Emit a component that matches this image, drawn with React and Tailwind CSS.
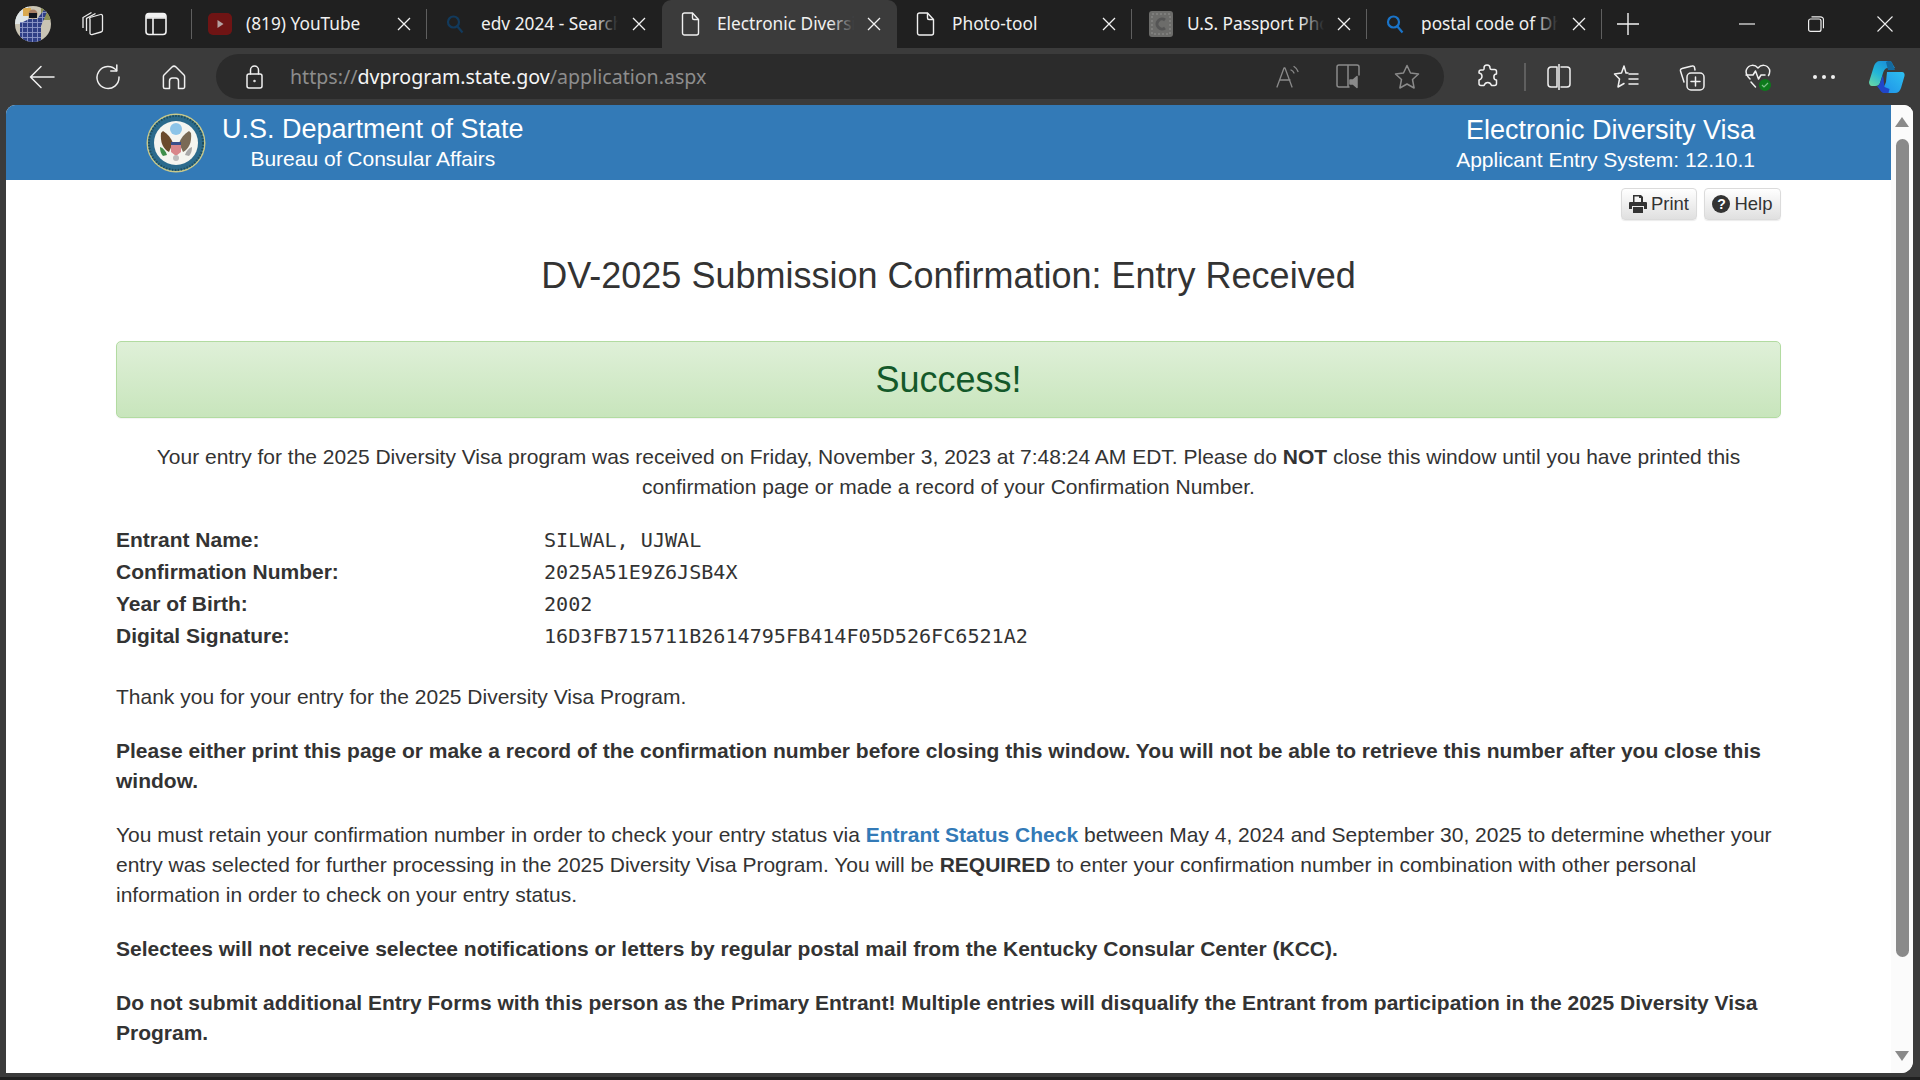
// App.jsx
import React from 'react';

const CloseIcon = ({ size = 14, stroke = 1.3 }) => (
  <svg width={size} height={size} viewBox="0 0 14 14" fill="none" stroke="#f2f2f2" strokeWidth={stroke}>
    <path d="M1 1l12 12M13 1L1 13" />
  </svg>
);

const PageIcon = () => (
  <svg width="20" height="24" viewBox="0 0 20 24" fill="none" stroke="#f0f0f0" strokeWidth="1.4">
    <path d="M3.5 1h8l6 6.5V21a2 2 0 0 1-2 2h-12a2 2 0 0 1-2-2V3a2 2 0 0 1 2-2z" />
    <path d="M11.5 1v5a1.5 1.5 0 0 0 1.5 1.5h4.5" />
  </svg>
);

const SearchIcon = ({ color }) => (
  <svg width="18" height="20" viewBox="0 0 18 20" fill="none" stroke={color} strokeWidth="2.2">
    <circle cx="7.5" cy="8" r="5.5" />
    <path d="M11.5 12.5l5 6" />
  </svg>
);

const YouTubeIcon = () => (
  <svg width="24" height="22" viewBox="0 0 24 22">
    <rect width="24" height="22" rx="5" fill="#6f1414" />
    <path d="M9.5 7l6 4-6 4z" fill="#b5a2a2" />
  </svg>
);

const StampIcon = () => (
  <svg width="24" height="26" viewBox="0 0 24 26">
    <rect width="24" height="26" rx="3" fill="#6c6c6a" />
    <rect x="3" y="3" width="18" height="20" fill="none" stroke="#7e7e7c" strokeWidth="2" strokeDasharray="2 2" />
    <path d="M16 9a5 5 0 1 0 0 8" fill="none" stroke="#555" strokeWidth="3" />
  </svg>
);

const tabs = [
  { icon: <YouTubeIcon />, title: '(819) YouTube', textW: 'w-[122px]', pl: 'pl-[16px]' },
  { icon: <SearchIcon color="#123a5c" />, title: 'edv 2024 - Search', textW: 'w-[137px]', pl: 'pl-[16px]', fade: true },
  { icon: <PageIcon />, title: 'Electronic Diversity Visa', textW: 'w-[137px]', pl: 'pl-[17px]', fade: true, active: true },
  { icon: <PageIcon />, title: 'Photo-tool', textW: 'w-[122px]', pl: 'pl-[17px]' },
  { icon: <StampIcon />, title: 'U.S. Passport Photo', textW: 'w-[137px]', pl: 'pl-[17px]', fade: true },
  { icon: <SearchIcon color="#1a74c9" />, title: 'postal code of Dhaka', textW: 'w-[137px]', pl: 'pl-[16px]', fade: true },
];

const Avatar = () => (
  <svg width="36" height="48" viewBox="0 0 36 48" className="ml-[15px]">
    <defs>
      <clipPath id="avatarClip"><ellipse cx="18" cy="24" rx="18" ry="18" /></clipPath>
      <pattern id="plaid" width="5" height="5" patternUnits="userSpaceOnUse">
        <rect width="5" height="5" fill="#2f3f86" />
        <path d="M0 2.5h5M2.5 0v5" stroke="#8d98c8" strokeWidth="0.9" />
      </pattern>
    </defs>
    <g clipPath="url(#avatarClip)">
      <rect y="6" width="36" height="36" fill="#c9c4b4" />
      <rect x="0" y="6" width="13" height="18" fill="#dfe6e8" />
      <rect x="8" y="8" width="8" height="8" fill="#d9a94f" />
      <rect x="26" y="8" width="10" height="12" fill="#8b8f55" />
      <circle cx="18" cy="14" r="4.5" fill="#a97f66" />
      <rect x="14" y="13" width="8" height="5" fill="#14161f" />
      <path d="M8 22l6-3h8l7-9 3 2-6 14v18H9z" fill="url(#plaid)" />
      <rect x="5" y="22" width="5" height="18" fill="url(#plaid)" />
    </g>
  </svg>
);

const TabStrip = () => (
  <div className="flex h-12 items-center bg-[#202020] text-[17.3px] text-[#f0f0f0] font-['Noto_Sans','Open_Sans',sans-serif]">
    <div className="flex w-[192px] shrink-0 items-center">
      <Avatar />
      <svg width="24" height="26" viewBox="0 0 24 26" fill="none" stroke="#ececec" strokeWidth="1.3" className="ml-[30px]">
        <path d="M9 6.5l10.5-3a1.5 1.5 0 0 1 2 1.5l0 14a2 2 0 0 1-1.5 2l-9 2.5a1.5 1.5 0 0 1-2-1.5V8.5A2 2 0 0 1 9 6.5z" />
        <path d="M5.5 20V7.5l9-5M2 17V6.5l8.5-5" />
      </svg>
      <svg width="22" height="24" viewBox="0 0 22 24" fill="none" stroke="#f2f2f2" strokeWidth="1.6" className="ml-[40px]">
        <rect x="1" y="1.5" width="20" height="21" rx="3" />
        <path d="M1 6h20M8 6v16.5" />
        <path d="M2 5V4a2 2 0 0 1 2-2h14a2 2 0 0 1 2 2v1z" fill="#f2f2f2" />
      </svg>
      <div className="ml-auto h-[30px] w-px bg-[#5f5f5f]" />
    </div>
    {tabs.map((t, i) => (
      <div
        key={t.title}
        className={
          'flex h-full w-[235px] shrink-0 items-center ' + t.pl +
          (t.active ? ' rounded-t-[9px] bg-[#3b3b3b]' : '')
        }
      >
        <span className="flex w-[24px] shrink-0 justify-center">{t.icon}</span>
        <span className={'relative ml-[14px] overflow-hidden whitespace-nowrap pb-[1px] ' + t.textW}>
          {t.title}
          {t.fade && (
            <span
              className={
                'absolute inset-y-0 right-0 w-[24px] bg-gradient-to-r from-transparent ' +
                (t.active ? 'to-[#3b3b3b]' : 'to-[#202020]')
              }
            />
          )}
        </span>
        <span className={'ml-auto flex ' + (i !== 1 && i !== 2 ? 'mr-[15px]' : 'mr-[16px]')}><CloseIcon /></span>
        {i !== 1 && i !== 2 && <span className="h-[30px] w-px shrink-0 bg-[#5f5f5f]" />}
      </div>
    ))}
    <svg width="22" height="22" viewBox="0 0 22 22" stroke="#f2f2f2" strokeWidth="1.4" className="ml-[15px]">
      <path d="M11 0v22M0 11h22" />
    </svg>
    <div className="ml-auto flex items-center">
      <svg width="16" height="2" viewBox="0 0 16 2" className="mr-[53px]"><path d="M0 1h16" stroke="#eee" strokeWidth="1.2" /></svg>
      <svg width="16" height="16" viewBox="0 0 16 16" fill="none" stroke="#eee" strokeWidth="1.2" className="mr-[53px]">
        <rect x="0.6" y="3" width="12.4" height="12.4" rx="2" />
        <path d="M3.5 0.8h9a3 3 0 0 1 3 3v8.5" />
      </svg>
      <svg width="16" height="16" viewBox="0 0 16 16" stroke="#eee" strokeWidth="1.1" className="mr-[27px]"><path d="M0.5 0.5l15 15M15.5 0.5l-15 15" /></svg>
    </div>
  </div>
);

const ToolIcon = ({ className, children, w = 24, h = 24, stroke = '#f0f0f0', sw = 1.5 }) => (
  <svg width={w} height={h} viewBox={`0 0 ${w} ${h}`} fill="none" stroke={stroke} strokeWidth={sw} strokeLinejoin="round" strokeLinecap="round" className={className}>
    {children}
  </svg>
);

const Toolbar = () => (
  <div className="flex h-[57px] items-center bg-[#3b3b3b]">
    <ToolIcon className="ml-[29px]" w={26} h={24}>
      <path d="M25 12H1.5M12 1.5L1.5 12 12 22.5" />
    </ToolIcon>
    <ToolIcon className="ml-[40px]" w={26} h={26}>
      <path d="M21.5 6.5A11 11 0 1 0 24 13" />
      <path d="M21.8 1v6h-6" />
    </ToolIcon>
    <ToolIcon className="ml-[41px]" w={24} h={26}>
      <path d="M2 11L10 3a3 3 0 0 1 4 0l8 8a2 2 0 0 1 .6 1.5V23a1.5 1.5 0 0 1-1.5 1.5H16.5V17a3 3 0 0 0-3-3h-3a3 3 0 0 0-3 3v7.5H2.9A1.5 1.5 0 0 1 1.4 23V12.5A2 2 0 0 1 2 11z" />
    </ToolIcon>
    <div className="ml-[30px] flex h-[45px] w-[1228px] items-center rounded-full bg-[#2b2b2b]">
      <ToolIcon className="ml-[30px]" w={17} h={24}>
        <rect x="1" y="9" width="15" height="14" rx="2" />
        <path d="M4.5 9V5a4 4 0 0 1 8 0v4" />
        <circle cx="8.5" cy="16" r="0.5" />
      </ToolIcon>
      <span className="ml-[27px] whitespace-nowrap font-['Noto_Sans','Open_Sans',sans-serif] text-[19.6px] text-[#8d8d8d]">
        https://<span className="text-[#f5f5f5]">dvprogram.state.gov</span>/application.aspx
      </span>
      <div className="ml-auto flex items-center">
        <ToolIcon stroke="#8a8a8a" w={24} h={24} sw={1.3} className="mr-[36px]">
          <path d="M1 22L8 3h1l7 19M4 15h10M15 5a6 6 0 0 1 3 3M18 1.5a9 9 0 0 1 4 5" />
        </ToolIcon>
        <ToolIcon stroke="#8a8a8a" w={26} h={26} sw={1.5} className="mr-[32px]">
          <path d="M13 23H3a2 2 0 0 1-2-2V3a2 2 0 0 1 2-2h18a2 2 0 0 1 2 2v8M12 1v22" />
          <path d="M14 16h3l4-3.5v11L17 20h-3z" fill="#8a8a8a" />
        </ToolIcon>
        <ToolIcon stroke="#8a8a8a" w={26} h={26} sw={1.5} className="mr-[24px]">
          <path d="M13 1.5l3.5 7.5 8 1-6 5.5 1.6 8.5-7.1-4-7.1 4 1.6-8.500-6-5.500 8-1z" />
        </ToolIcon>
      </div>
    </div>
    <ToolIcon className="ml-[30px]" w={26} h={26}>
      <path d="M10 4a3 3 0 0 1 6 0c0 1 .5 1.5 1.5 1.5h3a2 2 0 0 1 2 2v2.5c-3.5 0-3.5 6 0 6v3.5a2 2 0 0 1-2 2h-3c-1.5-4-6-4-7.5 0h-3a2 2 0 0 1-2-2v-3.5c4-1 4-6.5 0-7V8a2 2 0 0 1 2-2h2A1.500 1.500 0 0 0 10 4z" />
    </ToolIcon>
    <div className="ml-[24px] h-[28px] w-[2px] bg-[#5f5f5f]" />
    <ToolIcon className="ml-[21px]" w={24} h={26}>
      <path d="M10 3H4a3 3 0 0 0-3 3v14a3 3 0 0 0 3 3h6zM14 3h6a3 3 0 0 1 3 3v14a3 3 0 0 1-3 3h-6M12 0v26" />
    </ToolIcon>
    <ToolIcon className="ml-[42px]" w={26} h={26}>
      <path d="M15 9h-2L11 2 8.5 9 1.5 10l5 5L5 23l6-3.5" />
      <path d="M16 10h9M16 15h9M16 20h9" />
    </ToolIcon>
    <ToolIcon className="ml-[40px]" w={26} h={28}>
      <path d="M5 19L1.5 8a2 2 0 0 1 1.5-2.5L13 3a2 2 0 0 1 2.5 1.5L16 7" />
      <rect x="8" y="10" width="17" height="17" rx="4" />
      <path d="M16.5 14v9M12 18.5h9" />
    </ToolIcon>
    <div className="relative ml-[40px] h-[28px] w-[26px]">
      <ToolIcon w={26} h={26}>
        <path d="M5 16C1 12 .5 9 1.5 6.5 4 1 10 1.5 13 5c3-3.5 9-4 11.5 1.5.5 2 .5 3.5-1 6" />
        <path d="M1 12h7l2.5-4 3 8 2.5-4h4M6 19l4.5 5" />
      </ToolIcon>
      <span className="absolute bottom-0 right-0 flex h-[12px] w-[12px] items-center justify-center rounded-full bg-[#0d7a1c]">
        <svg width="8" height="8" viewBox="0 0 8 8" fill="none" stroke="#7fc08a" strokeWidth="1.2"><path d="M1 4l2 2 4-4" /></svg>
      </span>
    </div>
    <div className="ml-[42px] flex gap-[5px]">
      <span className="h-[4px] w-[4px] rounded-full bg-[#f0f0f0]" />
      <span className="h-[4px] w-[4px] rounded-full bg-[#f0f0f0]" />
      <span className="h-[4px] w-[4px] rounded-full bg-[#f0f0f0]" />
    </div>
    <svg width="36" height="32" viewBox="0 0 36 32" className="ml-[34px]">
      <defs>
        <linearGradient id="copA" x1="0" y1="1" x2="0.7" y2="0">
          <stop offset="0" stopColor="#6fd9a0" />
          <stop offset="0.5" stopColor="#22b6d8" />
          <stop offset="1" stopColor="#1a8fd8" />
        </linearGradient>
        <linearGradient id="copB" x1="0" y1="1" x2="1" y2="0">
          <stop offset="0" stopColor="#1e8fe8" />
          <stop offset="1" stopColor="#2ec0f0" />
        </linearGradient>
      </defs>
      <path d="M11 0h9c2 0 3 1 3.5 3L26 7H19c-3 0-4 2-5 5l-3 10c-1 2-2 3-5 3H3c-2 0-3-2-3-4l5-16c1-3 3-5 6-5z" fill="url(#copA)" />
      <path d="M18 11h15c2 0 3 2 2.5 4L32 27c-1 3-3 5-6 5h-9c-2 0-3-1-3.5-2.5L12 26c3 0 4-2 5-5z" fill="url(#copB)" />
      <path d="M14 14l-3 8c-1 2-1.5 3-3 3l4.500 6c1 1 2 1 4 1h3l1-4-5-2z" fill="#2146c9" />
      <path d="M19 0h1c2 0 3 1 3.5 3L26 9h-7l-2-8z" fill="#156a9e" />
    </svg>
  </div>
);

// rough stand-in for the Department of State seal
const Seal = () => (
  <svg width="60" height="60" viewBox="0 0 60 60">
    <circle cx="30" cy="30" r="29.5" fill="#c9c98a" />
    <circle cx="30" cy="30" r="28" fill="#2b6a8c" />
    <circle cx="30" cy="30" r="27" fill="none" stroke="#1e4d5e" strokeWidth="2" strokeDasharray="1.5 1.5" />
    <circle cx="30" cy="30" r="22" fill="#f5f5f0" />
    <circle cx="30" cy="16" r="6" fill="#8cc4e8" />
    <path d="M17 18c5 3 8 7 10 12l-4 9c-6-3-9-10-8-19z" fill="#6b4a2c" />
    <path d="M43 18c-5 3-8 7-10 12l4 9c6-3 9-10 8-19z" fill="#7a6a55" />
    <path d="M25 29h10v10l-5 4-5-4z" fill="#d9868a" />
    <rect x="25" y="29" width="10" height="3" fill="#3a4f8a" />
    <path d="M14 34c3 1 6 4 7 8l-4 1c-2-2-3-5-3-9z" fill="#3f8f4a" />
    <path d="M46 34c-3 1-6 4-7 8l4 1c2-2 3-5 3-9z" fill="#a8a8a8" />
    <circle cx="30" cy="45" r="3" fill="#bcbcbc" />
  </svg>
);

const Btn = ({ icon, label, w }) => (
  <div className={'flex h-[32px] items-center justify-center gap-[4px] rounded-[4px] border border-[#dbdbdb] bg-gradient-to-b from-white to-[#e0e0e0] text-[18.5px] text-[#333] shadow-[0_1px_1px_rgba(0,0,0,0.08)] ' + w}>
    {icon}
    {label}
  </div>
);

const Row = ({ label, value }) => (
  <div className="flex h-[32px] items-center">
    <b className="w-[428px] shrink-0 font-bold">{label}</b>
    <span className="font-['DejaVu_Sans_Mono',monospace] text-[20.1px]">{value}</span>
  </div>
);

const PageContent = () => (
  <div className="min-w-0 flex-1 overflow-hidden">
    <div className="flex h-[75px] items-center justify-between bg-[#337ab7] text-white">
      <div className="ml-[140px] flex items-center gap-[16px]">
        <Seal />
        <div className="mb-[2px] flex flex-col items-center">
          <div className="text-[27px] leading-[34px]">U.S. Department of State</div>
          <div className="text-[21px] leading-[26px]">Bureau of Consular Affairs</div>
        </div>
      </div>
      <div className="mr-[136px] flex flex-col items-end">
        <div className="text-[27px] leading-[34px]">Electronic Diversity Visa</div>
        <div className="text-[21px] leading-[26px]">Applicant Entry System: 12.10.1</div>
      </div>
    </div>

    <div className="ml-[110px] w-[1665px]">
      <div className="flex justify-end gap-[7px] pt-[8px]">
        <Btn
          label="Print"
          w="w-[76px]"
          icon={
            <svg width="18" height="18" viewBox="0 0 18 18" fill="#333">
              <path d="M4 0h8l2 2v5h-2V3h-2V1.5H5.5V7H4zM1 7h16a1 1 0 0 1 1 1v6h-3v-3H3v3H0V8a1 1 0 0 1 1-1zM4 12h10v6H4z" />
            </svg>
          }
        />
        <Btn
          label="Help"
          w="w-[77px]"
          icon={
            <span className="flex h-[18px] w-[18px] items-center justify-center rounded-full bg-[#333] text-[14px] font-bold text-white">?</span>
          }
        />
      </div>

      <h1 className="mt-[35px] text-center text-[36px] leading-[41px] text-[#333]">
        DV-2025 Submission Confirmation: Entry Received
      </h1>

      <div className="mt-[45px] flex h-[77px] items-center justify-center rounded-[5px] border border-[#b2dba1] bg-gradient-to-b from-[#dff0d8] to-[#c8e5bc] text-[36px] text-[#14592a] shadow-[0_1px_1px_rgba(0,0,0,0.05)]">
        Success!
      </div>

      <p className="mt-[24px] text-center">
        Your entry for the 2025 Diversity Visa program was received on Friday, November 3, 2023 at 7:48:24 AM EDT. Please do <b>NOT</b> close this window until you have printed this
        <br />
        confirmation page or made a record of your Confirmation Number.
      </p>

      <div className="mt-[22px]">
        <Row label="Entrant Name:" value="SILWAL, UJWAL" />
        <Row label="Confirmation Number:" value="2025A51E9Z6JSB4X" />
        <Row label="Year of Birth:" value="2002" />
        <Row label="Digital Signature:" value="16D3FB715711B2614795FB414F05D526FC6521A2" />
      </div>

      <p className="mt-[30px]">Thank you for your entry for the 2025 Diversity Visa Program.</p>

      <p className="mt-[24px] font-bold">
        Please either print this page or make a record of the confirmation number before closing this window. You will not be able to retrieve this number after you close this window.
      </p>

      <p className="mt-[24px]">
        You must retain your confirmation number in order to check your entry status via{' '}
        <b className="text-[#337ab7]">Entrant Status Check</b> between May 4, 2024 and September 30, 2025 to determine whether your entry was selected for further processing in the 2025 Diversity Visa Program. You will be <b>REQUIRED</b> to enter your confirmation number in combination with other personal information in order to check on your entry status.
      </p>

      <p className="mt-[24px] font-bold">
        Selectees will not receive selectee notifications or letters by regular postal mail from the Kentucky Consular Center (KCC).
      </p>

      <p className="mt-[24px] font-bold">
        Do not submit additional Entry Forms with this person as the Primary Entrant! Multiple entries will disqualify the Entrant from participation in the 2025 Diversity Visa Program.
      </p>
    </div>
  </div>
);

const Scrollbar = () => (
  <div className="flex w-[22px] shrink-0 flex-col items-center bg-[#fbfbfb] pt-[12px] pb-[12px]">
    <div className="h-0 w-0 border-x-[7px] border-b-[10px] border-x-transparent border-b-[#8a8a8a]" />
    <div className="mt-[12px] h-[818px] w-[13px] rounded-full bg-[#8a8a8a]" />
    <div className="mt-auto h-0 w-0 border-x-[7px] border-t-[10px] border-x-transparent border-t-[#8a8a8a]" />
  </div>
);

const App = () => {
  return (
    <div className="flex h-[1080px] w-[1920px] flex-col overflow-hidden bg-[#3b3b3b] font-['Liberation_Sans',Arial,sans-serif] text-[21px] leading-[30px] text-[#333]">
      <TabStrip />
      <Toolbar />
      <div className="ml-[6px] mr-[7px] flex h-[968px] shrink-0 overflow-hidden rounded-t-[9px] rounded-br-[12px] bg-white">
        <PageContent />
        <Scrollbar />
      </div>
      <div className="mt-[4px] h-[3px] bg-[#202020]" />
    </div>
  );
};

export default App;
